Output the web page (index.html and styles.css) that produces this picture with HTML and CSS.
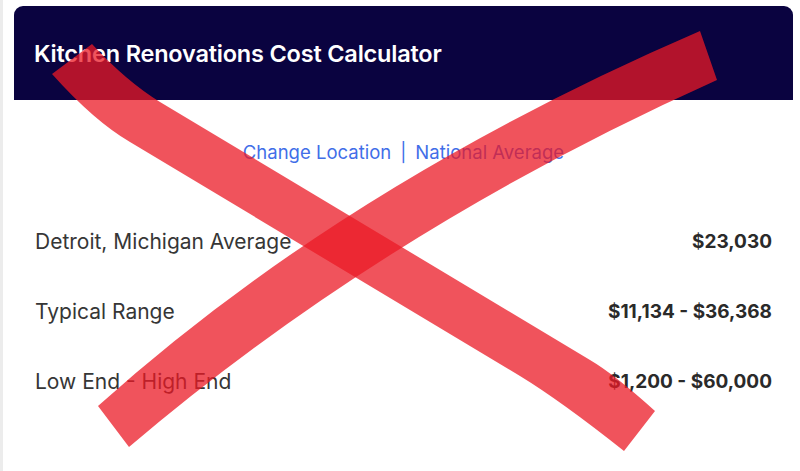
FILE: index.html
```html
<!DOCTYPE html>
<html lang="en">
<head>
<meta charset="utf-8">
<title>Kitchen Renovations Cost Calculator</title>
<link rel="stylesheet" href="styles.css">
</head>
<body>
<div class="page">
  <div class="card">
    <div class="header">
      <h1 class="title">Kitchen Renovations Cost Calculator</h1>
    </div>
    <div class="links">
      <a class="link" href="#">Change Location</a><span class="sep">|</span><a class="link" href="#">National Average</a>
    </div>
    <div class="rows">
      <div class="row"><span class="label">Detroit, Michigan Average</span><span class="value">$23,030</span></div>
      <div class="row"><span class="label">Typical Range</span><span class="value">$11,134 - $36,368</span></div>
      <div class="row"><span class="label">Low End - High End</span><span class="value">$1,200 - $60,000</span></div>
    </div>
  </div>
  <svg class="xmark" width="800" height="471" viewBox="0 0 800 471" aria-hidden="true">
    <path class="stroke" d="M52,74 L92,44 Q126,81 160,102 L590,360 Q614,374 655,411 L624,451 Q561,401 520,376 L130,142 Q94,121 52,74 Z"/>
    <path class="stroke" d="M700,31 Q345,184 98,406 L129,447 Q385,229 717,80 Z"/>
  </svg>
</div>
</body>
</html>
```

FILE: styles.css
```css
html, body {
  margin: 0;
  padding: 0;
}

body {
  background: #ececec;
  font-family: Inter, "Open Sans", sans-serif;
  width: 800px;
  height: 471px;
  overflow: hidden;
}

.page {
  position: relative;
  margin-left: 3px;
  background: #ffffff;
  height: 471px;
  padding: 6px 7px 0 11px;
  box-sizing: border-box;
}

.header {
  background: #0a0340;
  border-radius: 9px 9px 0 0;
  height: 94px;
  display: flex;
  align-items: center;
  padding: 0 20px;
  box-sizing: border-box;
}

.title {
  margin: 0;
  color: #ffffff;
  font-size: 23.5px;
  font-weight: 600;
  letter-spacing: -0.2px;
}

.links {
  margin-top: 40px;
  text-align: center;
  font-size: 18.5px;
  line-height: 24px;
  color: #416ee8;
}

.link {
  color: #416ee8;
  text-decoration: none;
}

.sep {
  margin: 0 9px;
}

.rows {
  margin-top: 42px;
  padding: 0 21px;
}

.row {
  display: flex;
  justify-content: space-between;
  align-items: center;
  height: 70px;
  font-size: 21px;
  color: #363636;
}

.value {
  font-size: 19px;
  font-weight: 700;
  color: #2a2a2a;
}

.xmark {
  position: absolute;
  left: -3px;
  top: 0;
  pointer-events: none;
}

.stroke {
  fill: rgb(235, 26, 38);
  fill-opacity: 0.75;
}
```
